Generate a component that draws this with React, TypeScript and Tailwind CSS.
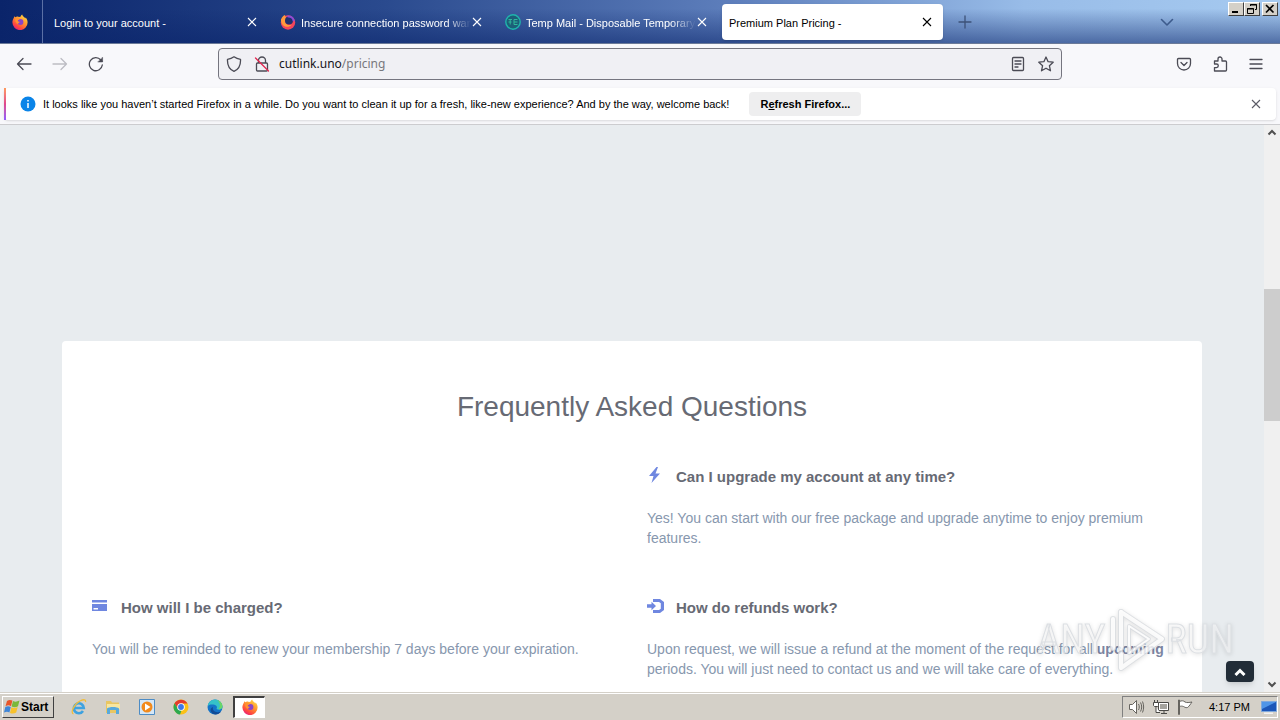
import type { ReactNode } from "react";
import clsx from "clsx";

function FirefoxIcon({ size = 16 }: { size?: number }) {
  return (
    <svg width={size} height={size} viewBox="0 0 16 16" aria-hidden="true">
      <defs>
        <linearGradient id="fx-flame" x1="0.85" y1="0" x2="0.2" y2="1">
          <stop offset="0" stopColor="#ffe14a" />
          <stop offset="0.4" stopColor="#ff9a2e" />
          <stop offset="0.75" stopColor="#ff4a3e" />
          <stop offset="1" stopColor="#e31587" />
        </linearGradient>
      </defs>
      <path
        fill="url(#fx-flame)"
        d="M10.2.4c.3 1.3 1.2 2 2.1 2.9.4.4.7.8.9 1.2l.4-.9c1.3 1.3 2 3 2 4.8a7.6 7.6 0 0 1-15.2.2C.4 6.600 1 5 1.900 3.700l.2-1.500 1.200 1c1-.6 2-.8 2.800-.4L8.300 3c.3-1 .9-2 1.900-2.600z"
      />
      <circle cx="8.500" cy="8" r="2.900" fill="#8a45c8" />
      <path fill="#ff9230" d="M3.200 4.300c1.500-.5 3-.2 4.300 1.100-.9.300-1.700.6-1.900 1.300.2.900 1.300 1 2.200 1-.3 1.200-1.600 1.400-2.300 2.300-1.700-.7-2.700-3.200-2.300-5.700z" />
    </svg>
  );
}

function FirefoxBrandIcon() {
  return (
    <svg width="16" height="16" viewBox="0 0 16 16" aria-hidden="true">
      <circle cx="8" cy="8.500" r="7.200" fill="#f5455c" />
      <path fill="#ff9a3c" d="M1 5.500C2 3 3.500 1.500 5 1c0 1.500.6 2.300 1.800 2.800L5 8c.8 2.600 4 3.800 6.600 2.700-2 2.800-7 2.800-9.200-.2C1.400 9 .8 7.300 1 5.500z" />
      <circle cx="9" cy="6.500" r="4" fill="#20306e" />
      <path fill="none" stroke="#8e4bd8" strokeWidth="2" d="M7.500 2.600c3.500-.6 6 1.500 6.200 4.600" />
    </svg>
  );
}

function TempMailIcon() {
  return (
    <svg width="16" height="16" viewBox="0 0 16 16" fill="none" aria-hidden="true">
      <circle cx="8" cy="8" r="7.200" fill="#1c5f78" stroke="#1fb5ac" strokeWidth="1.400" />
      <path stroke="#2fb89c" strokeWidth="1" d="M3.500 5.500h3.500M5.200 5.500v5M3.500 8h3M9 5.500h3.500M9 8h3.500M9 10.500h3.500M9 5.500v5" />
    </svg>
  );
}

function CloseIcon() {
  return (
    <svg width="10" height="10" viewBox="0 0 10 10" fill="none" stroke="currentColor" strokeWidth="1.100" aria-hidden="true">
      <path d="M1 1l8 8M9 1L1 9" />
    </svg>
  );
}

function ToolIcon({ children }: { children: ReactNode }) {
  return (
    <svg
      width="16"
      height="16"
      viewBox="0 0 16 16"
      fill="none"
      stroke="currentColor"
      strokeWidth="1.300"
      strokeLinecap="round"
      strokeLinejoin="round"
      aria-hidden="true"
    >
      {children}
    </svg>
  );
}

interface TabProps {
  title: string;
  icon?: ReactNode;
  active?: boolean;
}

function Tab({ title, icon, active = false }: TabProps) {
  return (
    <div
      className={clsx(
        "flex h-9 w-[221px] min-w-0 items-center rounded pr-[10px]",
        icon ? "pl-2" : "pl-[7px]",
        active ? "bg-white text-black shadow" : "text-white",
      )}
    >
      {icon && <span className="mr-[5px] w-4 shrink-0">{icon}</span>}
      <span
        className={clsx(
          "min-w-0 flex-1 overflow-hidden whitespace-nowrap pt-[2px] leading-4",
          icon && "[mask-image:linear-gradient(to_right,black_85%,transparent)]",
        )}
      >
        {title}
      </span>
      <button type="button" aria-label={`Close ${title}`} className="flex size-3 shrink-0 items-center justify-center">
        <CloseIcon />
      </button>
    </div>
  );
}

function CaptionButton({ label, children }: { label: string; children: ReactNode }) {
  return (
    <button
      type="button"
      aria-label={label}
      className="flex h-[14px] w-4 items-center justify-center border border-t-white border-l-white border-r-[#404040] border-b-[#404040] bg-[#d4d0c8]"
    >
      <svg width="12" height="12" viewBox="0 0 12 12" fill="none" stroke="#000" aria-hidden="true">
        {children}
      </svg>
    </button>
  );
}

function TabStrip() {
  return (
    <header className="relative flex h-11 items-stretch border-b border-[#6b7a98] bg-[linear-gradient(to_bottom,transparent_20%,rgba(10,36,106,0.55)),linear-gradient(to_right,#0a246a,#2a4a8e_30%,#5f80bd_58%,#98bce8_80%,#a6caf0)]">
      <div className="flex w-[43px] items-center justify-center border-r border-[#5b70a5] pr-[2px]">
        <FirefoxIcon />
      </div>
      <div className="flex min-w-0 flex-1 items-center gap-1 pl-1">
        <Tab title="Login to your account -" />
        <Tab title="Insecure connection password warning" icon={<FirefoxBrandIcon />} />
        <Tab title="Temp Mail - Disposable Temporary Email" icon={<TempMailIcon />} />
        <Tab title="Premium Plan Pricing -" active />
        <button type="button" aria-label="Open a new tab" className="ml-[6px] p-1 text-[#3d5278]">
          <ToolIcon>
            <path d="M2 8h12M8 2v12" />
          </ToolIcon>
        </button>
      </div>
      <div className="flex w-[121px] items-center text-[#3d5b8c]">
        <button type="button" aria-label="List all tabs">
          <ToolIcon>
            <path strokeWidth="1.600" d="M2.500 5.500L8 11l5.500-5.500" />
          </ToolIcon>
        </button>
      </div>
      <div className="absolute right-[2px] top-[2px] flex">
        <CaptionButton label="Minimize">
          <path strokeWidth="2" d="M2 9h6" />
        </CaptionButton>
        <CaptionButton label="Restore">
          <path d="M4.500 3V1.500h6v5H9" />
          <path d="M4 2h7M1.500 5.500h6v5h-6zM1 6h7" />
        </CaptionButton>
        <span className="w-[2px]" />
        <CaptionButton label="Close">
          <path strokeWidth="1.700" d="M2 2l7.500 7.500M9.500 2L2 9.500" />
        </CaptionButton>
      </div>
    </header>
  );
}

function NavBar() {
  return (
    <nav className="flex h-11 items-center bg-[#f8f8fb] pb-1 text-[#4b4b55]">
      <div className="flex w-[218px] items-center gap-5 pl-4">
        <button type="button" aria-label="Back">
          <ToolIcon>
            <path d="M15 8H1.500M7 2.500L1.500 8 7 13.500" />
          </ToolIcon>
        </button>
        <button type="button" aria-label="Forward" className="text-[#bdbdc3]">
          <ToolIcon>
            <path d="M1 8h13.500M9 2.500L14.500 8 9 13.500" />
          </ToolIcon>
        </button>
        <button type="button" aria-label="Reload">
          <ToolIcon>
            <path d="M14.300 9A6.500 6.500 0 1 1 12.800 4L14 5.200" />
            <path fill="currentColor" d="M14.600 1.500v4.500h-4.500z" strokeWidth="0.500" />
          </ToolIcon>
        </button>
      </div>
      <div className="flex h-8 min-w-0 flex-1 items-center gap-3 rounded border border-[#75757f] bg-[#f0f0f4] px-[7px]">
        <ToolIcon>
          <path d="M8 .8c2 1.500 4 2.200 6.500 2.500.3 5.500-1.500 10-6.500 12-5-2-6.800-6.500-6.500-12C4 3 6 2.300 8 .8z" />
        </ToolIcon>
        <ToolIcon>
          <path d="M4.500 7V4.500a3.500 3.500 0 0 1 7 0V7M3.500 7h9a1 1 0 0 1 1 1v6a1 1 0 0 1-1 1h-9a1 1 0 0 1-1-1V8a1 1 0 0 1 1-1z" />
          <path stroke="#e22850" strokeWidth="1.300" d="M1.500 2l13 13" />
        </ToolIcon>
        <a href="#pricing" className="-ml-[3px] min-w-0 flex-1 truncate font-['Noto_Sans',sans-serif] text-[12px] leading-5 text-[#77777c]">
          <span className="text-[#15141a]">cutlink.uno</span>/pricing
        </a>
        <button type="button" aria-label="Toggle reader view">
          <ToolIcon>
            <path d="M3.500 1.500h9a1 1 0 0 1 1 1v11a1 1 0 0 1-1 1h-9a1 1 0 0 1-1-1v-11a1 1 0 0 1 1-1zM5 5h6M5 8h6M5 11h3" />
          </ToolIcon>
        </button>
        <button type="button" aria-label="Bookmark this page">
          <ToolIcon>
            <path d="M8 1l2.100 4.700 5.100.5-3.800 3.500 1.100 5.100L8 12.200l-4.500 2.600 1.100-5.100L.8 6.200l5.100-.5z" />
          </ToolIcon>
        </button>
      </div>
      <div className="flex w-[218px] items-center justify-end gap-5 pr-4">
        <button type="button" aria-label="Save to Pocket">
          <ToolIcon>
            <path d="M2.500 2.500h11a1 1 0 0 1 1 1v4a6.500 6.500 0 0 1-13 0v-4a1 1 0 0 1 1-1zM5 6.500l3 3 3-3" />
          </ToolIcon>
        </button>
        <button type="button" aria-label="Extensions">
          <ToolIcon>
            <path d="M2.500 15h11a1 1 0 0 0 1-1V6a1 1 0 0 0-1-1H10V3a2 2 0 0 0-4 0v2H2.500v3h2a1.800 1.800 0 0 1 0 3.600h-2z" />
          </ToolIcon>
        </button>
        <button type="button" aria-label="Open application menu">
          <ToolIcon>
            <path d="M2 3.500h12M2 8h12M2 12.500h12" />
          </ToolIcon>
        </button>
      </div>
    </nav>
  );
}

function NotificationBar() {
  return (
    <div className="border-b border-[#cccccf] bg-[#f8f8fb] px-1 pb-1">
      <div className="flex h-8 items-center rounded bg-white pr-[15px] text-black shadow-sm">
        <span className="mr-[14px] h-8 w-[2px] bg-gradient-to-b from-[#ff9a5c] via-[#e0468c] to-[#9059ff]" />
        <svg width="16" height="16" viewBox="0 0 16 16" aria-hidden="true">
          <circle cx="8" cy="8" r="7.500" fill="#0a84e8" />
          <path stroke="#fff" strokeWidth="1.500" d="M8 7v5M8 4v1.600" />
        </svg>
        <p className="ml-[7px] min-w-0 truncate leading-4">
          It looks like you haven’t started Firefox in a while. Do you want to clean it up for a fresh, like-new experience? And by the way, welcome back!
        </p>
        <button type="button" className="ml-5 h-6 w-28 shrink-0 rounded bg-[#eeeeef] font-bold leading-4">
          R<u>e</u>fresh Firefox...
        </button>
        <button type="button" aria-label="Dismiss" className="ml-auto text-[#5b5b66]">
          <CloseIcon />
        </button>
      </div>
    </div>
  );
}

interface QuestionProps {
  icon: ReactNode;
  title: string;
  children: ReactNode;
}

function Question({ icon, title, children }: QuestionProps) {
  return (
    <article className="flex flex-col gap-[21px]">
      <h3 className="flex h-5 items-center text-[15px] font-bold text-[#676a74]">
        <span className="flex w-[29px] pb-1 text-[#6f87e0]">{icon}</span>
        {title}
      </h3>
      <p className="leading-5 text-[#8797ae]">{children}</p>
    </article>
  );
}

function Faq() {
  return (
    <section className="mx-[62px] min-h-full rounded-t-sm bg-white px-[30px] py-12 font-['Liberation_Sans',Arial,sans-serif] text-[14px]">
      <h2 className="text-center text-[28px] leading-9 text-[#676a74]">Frequently Asked Questions</h2>
      <div className="mt-[42px] grid grid-cols-2 gap-x-[30px] gap-y-[50px]">
        <div className="col-start-2">
          <Question
            title="Can I upgrade my account at any time?"
            icon={
              <svg width="16" height="16" viewBox="0 0 16 16" fill="currentColor" aria-hidden="true">
                <path d="M9.500 0L2 9h4.500L4.500 16 13 6.500H8.500L11 0z" />
              </svg>
            }
          >
            Yes! You can start with our free package and upgrade anytime to enjoy premium features.
          </Question>
        </div>
        <Question
          title="How will I be charged?"
          icon={
            <svg width="15" height="12" viewBox="0 0 15 12" fill="currentColor" aria-hidden="true">
              <path d="M0 0h15v2.500H0zM0 4h15v7H0z" />
              <path fill="#fff" d="M1.500 8h4.500v1.500H1.500z" />
            </svg>
          }
        >
          You will be reminded to renew your membership 7 days before your expiration.
        </Question>
        <Question
          title="How do refunds work?"
          icon={
            <svg width="17" height="14" viewBox="0 0 17 14" fill="currentColor" aria-hidden="true">
              <path d="M0 5.200h4.500V2.800L9 7l-4.500 4.200V8.800H0z" />
              <path d="M6 0h7l4 3v8l-4 3H6v-3h6l1.800-1.200V4.200L12 3H6z" />
            </svg>
          }
        >
          Upon request, we will issue a refund at the moment of the request for all{" "}
          <strong className="text-[#7c85a2]">upcoming</strong> periods. You will just need to contact us and we will take care of everything.
        </Question>
      </div>
    </section>
  );
}

function Watermark() {
  return (
    <div className="pointer-events-none absolute right-[30px] bottom-5 flex items-center font-['Roboto_Condensed',Roboto,sans-serif] text-[40px] leading-none text-white/50 drop-shadow-sm [-webkit-text-stroke:1px_#dcdfe3]">
      <span>ANY</span>
      <svg width="60" height="64" viewBox="0 0 60 64" fill="none" strokeLinejoin="round" strokeLinecap="round" opacity="0.8" aria-hidden="true">
        <g stroke="#d9dce0" strokeWidth="6">
          <path d="M15 4l41 27-41 29V46" />
          <path d="M15 4v36M7 11v29" />
          <path strokeWidth="4" d="M23 18l20 13-20 14z" />
        </g>
        <g stroke="#fff" strokeWidth="4">
          <path d="M15 4l41 27-41 29V46" />
          <path d="M15 4v36M7 11v29" />
          <path strokeWidth="2" d="M23 18l20 13-20 14z" />
        </g>
      </svg>
      <span>RUN</span>
    </div>
  );
}

function ScrollBar() {
  return (
    <div className="flex w-4 flex-col items-center bg-[#f0f0f0] text-[#505050]">
      <svg width="16" height="16" viewBox="0 0 16 16" fill="none" stroke="currentColor" strokeWidth="2" aria-hidden="true">
        <path d="M4.500 9.500L8 6l3.500 3.500" />
      </svg>
      <div className="flex w-full flex-1 flex-col">
        <span className="flex-[148]" />
        <span className="flex-[132] bg-[#cdcdcd]" />
        <span className="flex-[255]" />
      </div>
      <svg width="16" height="16" viewBox="0 0 16 16" fill="none" stroke="currentColor" strokeWidth="2" aria-hidden="true">
        <path d="M4.500 6.500L8 10l3.500-3.500" />
      </svg>
    </div>
  );
}

function TaskButton({ label, active = false, children }: { label: string; active?: boolean; children: ReactNode }) {
  return (
    <button
      type="button"
      aria-label={label}
      className={clsx(
        "flex h-[22px] w-8 items-center justify-center",
        active && "border border-t-2 border-l-2 border-t-[#404040] border-l-[#404040] border-r-white border-b-white bg-white",
      )}
    >
      <svg width="16" height="16" viewBox="0 0 16 16" aria-hidden="true">
        {children}
      </svg>
    </button>
  );
}

function Taskbar() {
  return (
    <footer className="flex h-7 items-center border-t border-[#d4d0c8] bg-[#d4d0c8] px-[2px] text-black shadow-[inset_0_1px_0_#fff]">
      <button
        type="button"
        className="flex h-[22px] w-[52px] items-center gap-[1px] border border-t-white border-l-white border-r-[#404040] border-b-[#404040] pl-[1px] text-[12px] leading-4 font-bold"
      >
        <svg width="16" height="16" viewBox="0 0 16 16" className="shrink-0" aria-hidden="true">
          <path fill="#e8562a" d="M3 2c2-1.500 3.500-1.300 5.400-.4L7 7.200C5.300 6 3.700 6 1.500 7.200z" />
          <path fill="#7bb83a" d="M9 2c1.800 1 3.700 1 6.500-.4L14 7.200c-2 1.300-4.400 1.300-6.400.3z" />
          <path fill="#3f86d8" d="M1.300 8c2-1.200 3.700-1 5.500-.1L5.400 13.500C3.800 12.500 2.200 12.500 0 13.500z" />
          <path fill="#f8c22c" d="M7.400 8.300c2 1 4 1 6.300-.3l-1.500 5.500c-2 1.400-4.200 1.400-6.200.4z" />
        </svg>
        Start
      </button>
      <div className="ml-[9px] flex gap-[2px]">
        <TaskButton label="Internet Explorer">
          <path fill="none" stroke="#3ea2e0" strokeWidth="2.600" d="M3.500 9h9.300A5 5 0 1 0 12 12" />
          <path fill="none" stroke="#f0bd3c" strokeWidth="1.300" d="M2.500 15C-1 14 3 5 9 2c4-2 6-1.500 5.500 1" />
        </TaskButton>
        <TaskButton label="Windows Explorer">
          <path fill="#e9c662" d="M1 2h5l1 1.500h7V14H1z" />
          <path fill="#f8e6a0" d="M2 5h13v5H2z" />
          <path fill="#58a9dc" d="M2 15V9.500c2-2 10-2 12 0V15h-3v-4H5v4z" />
        </TaskButton>
        <TaskButton label="Windows Media Player">
          <path fill="#d5e7f7" stroke="#4d8cc5" d="M.5.500h15v15H.5z" />
          <circle cx="8" cy="8" r="5.500" fill="#f28a1c" />
          <path fill="#fff" d="M6 4.500l5.500 3.500L6 11.500z" />
        </TaskButton>
        <TaskButton label="Google Chrome">
          <circle cx="8" cy="8" r="7.500" fill="#fbc116" />
          <path fill="#e33b2e" d="M1.500 4.300A7.500 7.500 0 0 1 14.500 4.500H8L5 10z" />
          <path fill="#2da94f" d="M1.500 4.300L5 10l3.500 1.500-1.500 4A7.500 7.500 0 0 1 1.500 4.300z" />
          <circle cx="8" cy="8" r="3.800" fill="#fff" />
          <circle cx="8" cy="8" r="2.900" fill="#3c78e8" />
        </TaskButton>
        <TaskButton label="Microsoft Edge">
          <circle cx="8" cy="8" r="7.500" fill="#1473c8" />
          <path fill="#35c1c9" d="M.6 7A7.500 7.500 0 0 1 15.500 7.500c.2 3-3.500 4-6 2.500 1-1.500.5-3.500-2-4.200C4.500 5 2 5.500.6 7z" />
          <path fill="#6ad66a" d="M10 1c3.500.8 5.600 3.600 5.500 6.500-.2 2-2 2.800-4 2.600C14 7 13 3.500 10 1z" />
          <path fill="#124b96" d="M6 8c-1 4 2.500 6.500 8 4.500-2 3-6.500 4-9 1.500S3.500 9 6 8z" />
        </TaskButton>
        <TaskButton label="Firefox" active>
          <FirefoxIcon />
        </TaskButton>
      </div>
      <div className="ml-auto flex h-[22px] items-center border border-t-[#808080] border-l-[#808080] border-r-white border-b-white pl-[6px]">
        <div className="flex gap-2">
          <svg width="16" height="16" viewBox="0 0 16 16" fill="#fff" stroke="#66645f" aria-hidden="true">
            <path d="M.5 5.500h3l4-4v13l-4-4h-3z" />
            <path fill="none" d="M9.500 5c1 2 1 4 0 6M11.500 3.500c1.600 3 1.600 6 0 9M13.500 2.500c1.500 3.500 1.500 7.500 0 11" />
          </svg>
          <svg width="16" height="16" viewBox="0 0 16 16" fill="#fff" stroke="#4a4946" aria-hidden="true">
            <path d="M5.500 3.500h10v8h-10zM8 14.500h6M11 12v2" />
            <path fill="#a5a39e" stroke="none" d="M7 5h7v5H7z" />
            <path d="M.5 3.500h5v3l-1 1h-3l-1-1zM1.500 1v2.500M4.500 1v2.500M3 7.500v6h4" />
          </svg>
          <svg width="16" height="16" viewBox="0 0 16 16" fill="#fff" stroke="#66645f" aria-hidden="true">
            <path d="M1.500 1v14.500h1V1zM2.500 2.500c2-1 4-1 5.500.5 2 1 4 .5 7 0-1.500 2-2.500 4-4.500 5.500-2 .5-3-.5-4-1-1.500-.5-2.500-.5-4 0z" />
          </svg>
        </div>
        <time className="ml-4 w-[49px] whitespace-nowrap leading-4">4:17 PM</time>
        <svg width="16" height="16" viewBox="0 0 16 16" className="ml-[3px]" aria-hidden="true">
          <path fill="#1c56b8" stroke="#7fa8dc" d="M.5 2.500h15v10H.5z" />
          <path fill="#4f95e8" d="M1 3h14L1 10z" />
          <path fill="#f2f2f2" d="M3 13.500h9V15H3z" />
        </svg>
      </div>
    </footer>
  );
}

export default function App() {
  return (
    <div className="flex h-screen flex-col overflow-hidden font-['Liberation_Sans',Tahoma,sans-serif] text-[11px]">
      <TabStrip />
      <NavBar />
      <NotificationBar />
      <div className="flex min-h-0 flex-1">
        <main className="relative min-w-0 flex-1 overflow-hidden bg-[#e8ecef] pt-[216px]">
          <Faq />
          <a
            href="#top"
            aria-label="Back to top"
            className="absolute right-[10px] bottom-[10px] flex h-[21px] w-7 items-center justify-center rounded-sm bg-[#222d38] shadow-md"
          >
            <svg width="12" height="8" viewBox="0 0 12 8" fill="none" stroke="#fff" strokeWidth="3" aria-hidden="true">
              <path d="M1.500 7L6 2.500 10.500 7" />
            </svg>
          </a>
          <Watermark />
        </main>
        <ScrollBar />
      </div>
      <Taskbar />
    </div>
  );
}
